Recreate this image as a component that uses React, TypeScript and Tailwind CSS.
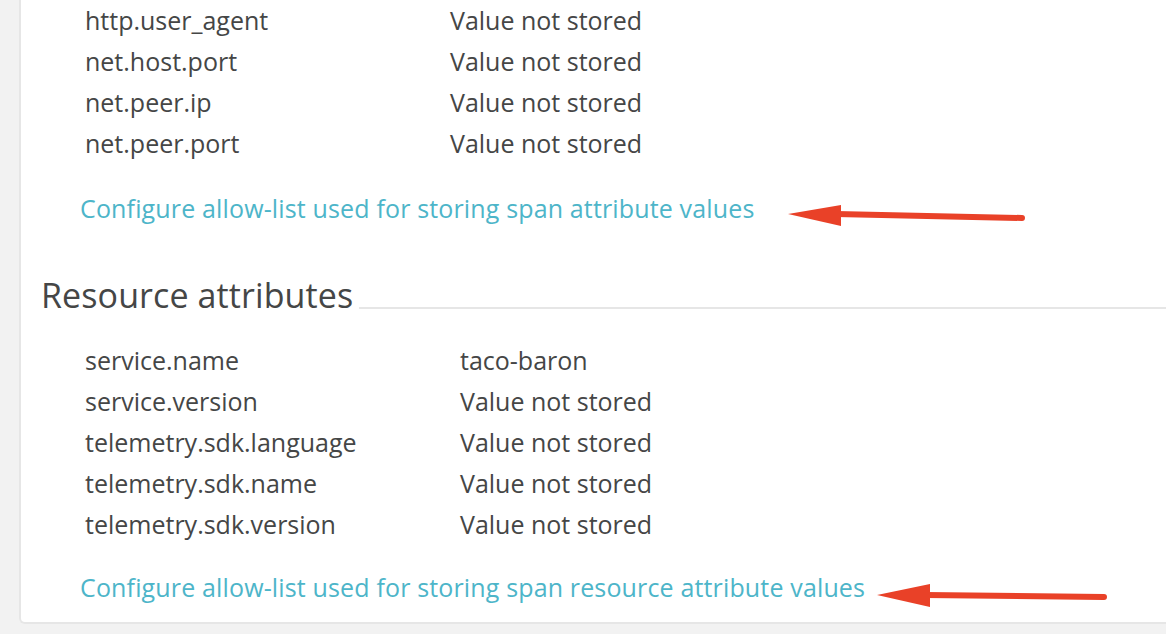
import React from "react";

const font = { fontFamily: '"Open Sans", "Noto Sans", sans-serif' };

const spanAttrs = [
  ["http.user_agent", "Value not stored"],
  ["net.host.port", "Value not stored"],
  ["net.peer.ip", "Value not stored"],
  ["net.peer.port", "Value not stored"],
];

const resAttrs = [
  ["service.name", "taco-baron"],
  ["service.version", "Value not stored"],
  ["telemetry.sdk.language", "Value not stored"],
  ["telemetry.sdk.name", "Value not stored"],
  ["telemetry.sdk.version", "Value not stored"],
];

function Rows({ items, keyWidth }: { items: string[][]; keyWidth: string }) {
  return (
    <div className="pl-[64px]">
      {items.map(([k, v]) => (
        <div key={k} className="flex h-[41px] items-center text-[25px] text-[#454646]">
          <div className={keyWidth}>{k}</div>
          <div>{v}</div>
        </div>
      ))}
    </div>
  );
}

export default function App() {
  return (
    <div className="relative h-[634px] w-[1166px] overflow-hidden bg-[#f2f2f2] pl-[19px]" style={font}>
      <div className="h-[624px] rounded-bl-[6px] border-b-2 border-l-2 border-[#e6e6e6] bg-white">
        <Rows items={spanAttrs} keyWidth="w-[365px]" />
        <div className="mt-[29px] pl-[59px] text-[25px] leading-[30px] tracking-[0.15px] text-[#4db5c9]">
          Configure allow-list used for storing span attribute values
        </div>
        <div className="mt-[52px] flex items-end pl-[20px]">
          <div className="text-[34px] leading-[40px] tracking-[0.1px] text-[#454646]">Resource attributes</div>
          <div className="mb-[6px] ml-[6px] h-[2px] flex-1 bg-[#e6e6e6]" />
        </div>
        <div className="mt-[25px]">
          <Rows items={resAttrs} keyWidth="w-[375px]" />
        </div>
        <div className="mt-[27px] pl-[59px] text-[25px] leading-[30px] tracking-[0.15px] text-[#4db5c9]">
          Configure allow-list used for storing span resource attribute values
        </div>
      </div>
      <svg className="absolute left-0 top-0" width="1166" height="634">
        <line x1="836" y1="214" x2="1022" y2="218" stroke="#e94128" strokeWidth="6" strokeLinecap="round" />
        <polygon points="788,214 841,205 841,226" fill="#e94128" />
        <line x1="925" y1="595" x2="1104" y2="597" stroke="#e94128" strokeWidth="6" strokeLinecap="round" />
        <polygon points="877,595 930,584 930,607" fill="#e94128" />
      </svg>
    </div>
  );
}
